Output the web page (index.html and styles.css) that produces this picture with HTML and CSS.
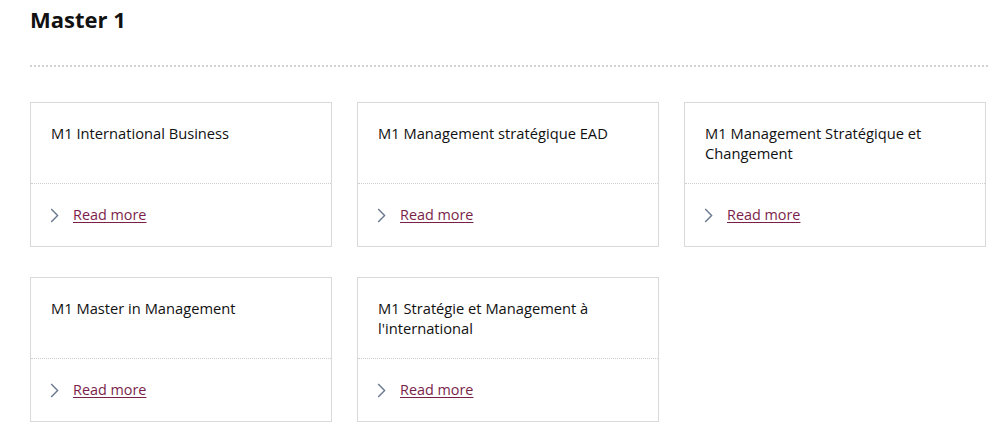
FILE: index.html
```html
<!DOCTYPE html>
<html lang="fr">
<head>
<meta charset="utf-8">
<title>Master 1</title>
<link rel="stylesheet" href="styles.css">
</head>
<body>
<main class="page">
  <h1 class="page-title">Master 1</h1>
  <div class="cards">
    <article class="card">
      <div class="card-head">M1 International Business</div>
      <div class="card-foot"><svg class="chev" width="9" height="15" viewBox="0 0 9 15"><path d="M1.2 1 L7.6 7.5 L1.2 14" fill="none" stroke="currentColor" stroke-width="1.4"/></svg><a href="#" class="more">Read more</a></div>
    </article>
    <article class="card">
      <div class="card-head">M1 Management stratégique EAD</div>
      <div class="card-foot"><svg class="chev" width="9" height="15" viewBox="0 0 9 15"><path d="M1.2 1 L7.6 7.5 L1.2 14" fill="none" stroke="currentColor" stroke-width="1.4"/></svg><a href="#" class="more">Read more</a></div>
    </article>
    <article class="card">
      <div class="card-head">M1 Management Stratégique et Changement</div>
      <div class="card-foot"><svg class="chev" width="9" height="15" viewBox="0 0 9 15"><path d="M1.2 1 L7.6 7.5 L1.2 14" fill="none" stroke="currentColor" stroke-width="1.4"/></svg><a href="#" class="more">Read more</a></div>
    </article>
    <article class="card">
      <div class="card-head">M1 Master in Management</div>
      <div class="card-foot"><svg class="chev" width="9" height="15" viewBox="0 0 9 15"><path d="M1.2 1 L7.6 7.5 L1.2 14" fill="none" stroke="currentColor" stroke-width="1.4"/></svg><a href="#" class="more">Read more</a></div>
    </article>
    <article class="card">
      <div class="card-head">M1 Stratégie et Management à l'international</div>
      <div class="card-foot"><svg class="chev" width="9" height="15" viewBox="0 0 9 15"><path d="M1.2 1 L7.6 7.5 L1.2 14" fill="none" stroke="currentColor" stroke-width="1.4"/></svg><a href="#" class="more">Read more</a></div>
    </article>
  </div>
</main>
</body>
</html>
```
FILE: styles.css
```css
* { box-sizing: border-box; }
html, body { margin: 0; padding: 0; background: #fff; }
body {
  font-family: "Open Sans", "Noto Sans", sans-serif;
  color: #1a1a1a;
}
.page {
  padding: 4px 19px 0 30px;
}
.page-title {
  margin: 0;
  font-size: 22px;
  font-weight: 700;
  line-height: 30px;
  color: #111;
  padding-bottom: 31px;
  border-bottom: 2px dotted #d2d2d2;
}
.cards {
  margin-top: 35px;
  display: grid;
  grid-template-columns: repeat(3, 302px);
  column-gap: 25px;
  row-gap: 30px;
}
.card {
  border: 1px solid #d9d9d9;
  background: #fff;
}
.card-head {
  height: 81px;
  padding: 20px 20px 0 20px;
  font-size: 14.7px;
  line-height: 20px;
  color: #111;
  border-bottom: 1px dotted #cfcfcf;
}
.card-foot {
  display: flex;
  align-items: center;
  padding: 21px 19px 21px 19px;
  line-height: 20px;
  font-size: 14.4px;
}
.chev {
  color: #6a7890;
  margin-right: 14px;
  flex: none;
}
.more {
  color: #7a1f4c;
  text-decoration: underline;
  text-underline-offset: 2px;
}
```
